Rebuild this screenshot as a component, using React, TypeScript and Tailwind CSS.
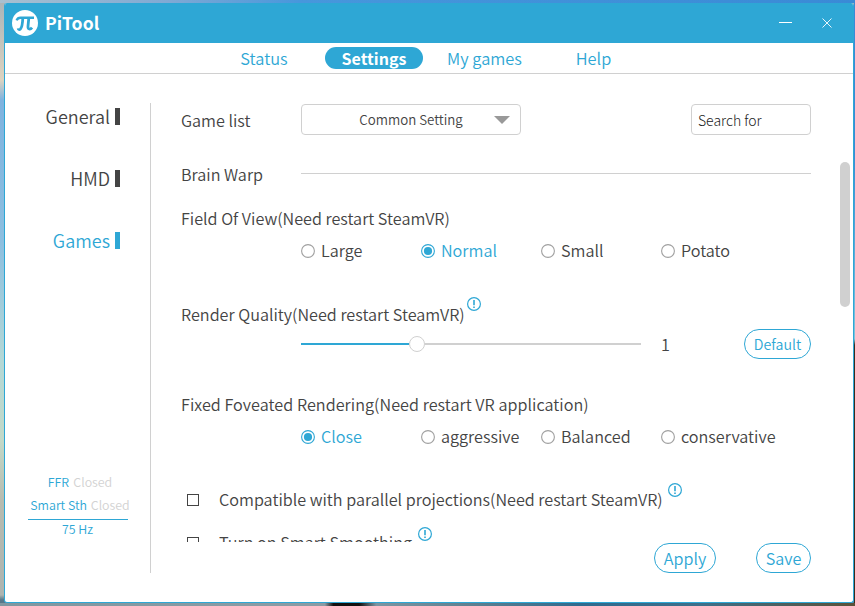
import type { ReactNode } from "react";

const tabs = [
  { label: "Status", width: "w-[122px]" },
  { label: "Settings", width: "w-[98px]", active: true },
  { label: "My games", width: "w-[123px]" },
  { label: "Help", width: "w-[95px]" },
];

const sections = [{ label: "General" }, { label: "HMD" }, { label: "Games", active: true }];

const fieldOfView = ["Large", "Normal", "Small", "Potato"];
const foveated = ["Close", "aggressive", "Balanced", "conservative"];

function InfoIcon() {
  return (
    <svg width="14" height="14" viewBox="0 0 14 14" fill="none" className="shrink-0">
      <circle cx="7" cy="7" r="6.4" stroke="#2ea7d5" strokeWidth="1.2" />
      <path d="M7 3v5.2M7 9.4v1.6" stroke="#2ea7d5" strokeWidth="1.6" />
    </svg>
  );
}

function RadioRow({ options, value }: { options: string[]; value: string }) {
  return (
    <div className="ml-[120px] flex h-6 items-center">
      {options.map((option) => (
        <div key={option} className="flex w-[120px] shrink-0 items-center gap-[6px]">
          <svg width="14" height="14" viewBox="0 0 14 14" fill="none" className="shrink-0">
            <circle cx="7" cy="7" r="6.4" stroke={option === value ? "#2ea7d5" : "#a0a0a0"} strokeWidth="1.1" />
            {option === value && <circle cx="7" cy="7" r="4.1" fill="#2ea7d5" />}
          </svg>
          <span className={option === value ? "leading-[22px] pb-0.5 text-[#2ea7d5]" : "leading-[22px] pb-0.5"}>
            {option}
          </span>
        </div>
      ))}
    </div>
  );
}

function CheckRow({ label, className, iconClass }: { label: string; className: string; iconClass: string }) {
  return (
    <div className={`flex h-6 items-center pl-[6px] ${className}`}>
      <span className="h-3 w-3 shrink-0 border border-[#444]" />
      <span className="ml-5 pb-0.5 leading-[22px]">{label}</span>
      <span className={iconClass}>
        <InfoIcon />
      </span>
    </div>
  );
}

function PillButton({ children, className }: { children: ReactNode; className: string }) {
  return (
    <button
      className={`flex h-[30px] items-center justify-center rounded-full border border-[#2ea7d5] text-[#2ea7d5] ${className}`}
    >
      {children}
    </button>
  );
}

function TitleBar() {
  return (
    <header className="flex h-10 shrink-0 items-center bg-[#2ea7d5] pr-[21px] pl-[7px] text-white">
      <svg width="26" height="26" viewBox="0 0 26 26" fill="none">
        <circle cx="13" cy="13" r="13" fill="#fff" />
        <path d="M4.6 10.4C5.4 8.4 6.6 7.8 8.5 7.8H22" stroke="#2ea7d5" strokeWidth="2.4" />
        <path d="M10.8 8C10.6 13 10 17.3 8.4 19C7.5 19.9 6.3 19.6 6.2 18.4" stroke="#2ea7d5" strokeWidth="2.8" />
        <path d="M16.8 8L16 16.3C15.8 19.4 18.2 20 20 17.6" stroke="#2ea7d5" strokeWidth="2.8" />
      </svg>
      <span className="ml-[7px] text-[17.6px] leading-10 font-bold">PiTool</span>
      <svg width="13" height="10" className="ml-auto" fill="none" stroke="#fff">
        <path d="M0 4.5h13" />
      </svg>
      <svg width="10" height="10" className="ml-[30px]" fill="none" stroke="#fff" strokeWidth="0.9">
        <path d="M.5 .5l9 9M9.5 .5l-9 9" />
      </svg>
    </header>
  );
}

function Sidebar() {
  return (
    <aside className="my-[29px] flex w-[146px] shrink-0 flex-col border-r border-[#d0d0d0]">
      <nav className="flex flex-col gap-[38px] pt-[1.5px] pr-[30px] text-[18px]">
        {sections.map((section) => (
          <div
            key={section.label}
            className={`flex h-6 items-center justify-end gap-[5px] ${section.active ? "text-[#2ea7d5]" : ""}`}
          >
            <span className="pb-0.5 leading-[22px]">{section.label}</span>
            <span className={`h-[17px] w-[5px] ${section.active ? "bg-[#2ea7d5]" : "bg-[#444]"}`} />
          </div>
        ))}
      </nav>
      <div className="mt-auto mb-[33px] flex w-[150px] flex-col items-center text-[12.4px] text-[#2ea7d5]">
        <p className="h-[23px] leading-[23px]">
          FFR <span className="ml-[1.5px] text-[#d2d2d2]">Closed</span>
        </p>
        <p className="h-[25px] leading-[23px]">
          Smart Sth <span className="ml-px text-[#d2d2d2]">Closed</span>
        </p>
        <p className="mr-[5px] w-[100px] border-t border-[#2ea7d5] pb-0.5 text-center leading-[18px]">75 Hz</p>
      </div>
    </aside>
  );
}

function GameSettings() {
  return (
    <div className="flex h-[407px] flex-col overflow-hidden">
      <div className="mt-[28px] flex h-6 shrink-0 items-center">
        <span className="w-[120px] pb-0.5 leading-[22px]">Brain Warp</span>
        <span className="mb-[3px] h-px w-[510px] bg-[#d0d0d0]" />
      </div>
      <div className="mt-5 h-6 shrink-0 leading-[22px]">Field Of View(Need restart SteamVR)</div>
      <div className="mt-2 shrink-0">
        <RadioRow options={fieldOfView} value="Normal" />
      </div>
      <div className="mt-10 flex h-6 shrink-0 items-center">
        <span className="pb-0.5 leading-[22px]">Render Quality(Need restart SteamVR)</span>
        <span className="mb-[22px] ml-[2px]">
          <InfoIcon />
        </span>
      </div>
      <div className="mt-[2px] ml-[120px] flex h-[30px] w-[510px] shrink-0 items-center">
        <div className="flex w-[340px] items-center">
          <span className="h-[2px] w-[108px] bg-[#2ea7d5]" />
          <span className="h-4 w-4 rounded-full border border-[#d0d0d0] bg-white" />
          <span className="h-[2px] flex-1 bg-[#d0d0d0]" />
        </div>
        <span className="ml-5">1</span>
        <PillButton className="ml-auto w-[67px] text-[14.2px]">Default</PillButton>
      </div>
      <div className="mt-[34px] h-6 shrink-0 leading-[22px] tracking-[0.04px]">
        Fixed Foveated Rendering(Need restart VR application)
      </div>
      <div className="mt-2 shrink-0">
        <RadioRow options={foveated} value="Close" />
      </div>
      <CheckRow
        className="mt-[39px] shrink-0"
        iconClass="mb-5 ml-[5px]"
        label="Compatible with parallel projections(Need restart SteamVR)"
      />
      <CheckRow className="mt-[19px] shrink-0" iconClass="mb-[18px] ml-[6px]" label="Turn on Smart Smoothing" />
    </div>
  );
}

export default function App() {
  return (
    <div className="h-[606px] w-[855px] bg-[linear-gradient(#a9b4b8_0,#ddd3c0_80px,#7fb3df_100px,#8dbfe0_240px,#b4d8d6_360px,#c3d9c8_440px,#b8bcb0_500px,#aeb4b0_595px,#56788a_600px)] font-['Noto_Sans_CJK_SC',sans-serif] text-[16.2px] leading-6 font-[350] text-[#444]">
      <div className="h-[3px] bg-[linear-gradient(90deg,#a8c0d0,#7fa9d4_20%,#4797dc_35%,#3a8ad6)]" />
      <div className="flex">
        <div className="ml-1 flex h-[600px] w-[850px] flex-col overflow-hidden rounded-[3px] border border-t-0 border-[#2ea7d5] bg-white">
          <TitleBar />
          <nav className="flex h-[31px] shrink-0 border-b border-[#d0d0d0] pt-1 pl-[198px] text-[16.4px] leading-[22px] text-[#2ea7d5]">
            {tabs.map((tab) => (
              <div
                key={tab.label}
                className={`h-[22px] rounded-full text-center ${tab.width} ${tab.active ? "bg-[#2ea7d5] text-[16px] font-bold text-white" : ""}`}
              >
                {tab.label}
              </div>
            ))}
          </nav>
          <div className="flex flex-1">
            <Sidebar />
            <main className="w-[660px] pt-[30px] pl-[30px]">
              <div className="flex h-[31px] items-center">
                <span className="w-[120px] pt-px">Game list</span>
                <div className="flex h-[31px] w-[220px] items-center rounded-[4px] border border-[#d0d0d0] text-[13.3px]">
                  <span className="flex-1 pt-px text-center">Common Setting</span>
                  <svg width="16" height="8" className="mr-[10px] -ml-[26px]">
                    <path d="M0 0h16l-8 8z" fill="#999" />
                  </svg>
                </div>
                <div className="ml-[170px] h-[31px] w-[120px] rounded-[4px] border border-[#d0d0d0] pl-[6px] text-[14px] leading-[31px] font-light text-[#222]">
                  Search for
                </div>
              </div>
              <GameSettings />
              <div className="mt-px flex h-[30px] w-[630px] items-center justify-end gap-10">
                <PillButton className="w-[62px] text-[16.2px]">Apply</PillButton>
                <PillButton className="w-[55px] text-[16.2px]">Save</PillButton>
              </div>
            </main>
            <div className="ml-auto pt-[88px] pr-[3px]">
              <div className="h-[145px] w-[10px] rounded-full bg-[#d0d0d0]" />
            </div>
          </div>
        </div>
        <div className="h-[600px] w-px bg-[linear-gradient(#3a8ad6_25%,#7fc4dc_56%,#3a2a1c_57%)]" />
      </div>
      <div className="h-[3px] bg-[linear-gradient(90deg,#7f97a0,#8a9ba4_30%,#8a9ba4_38%,#141010_39%,#141010_42%,#7c95a2_44%,#5f8090_55%,#2f6a8e_68%,#3d6f8a_82%,#5c5138)]" />
    </div>
  );
}
